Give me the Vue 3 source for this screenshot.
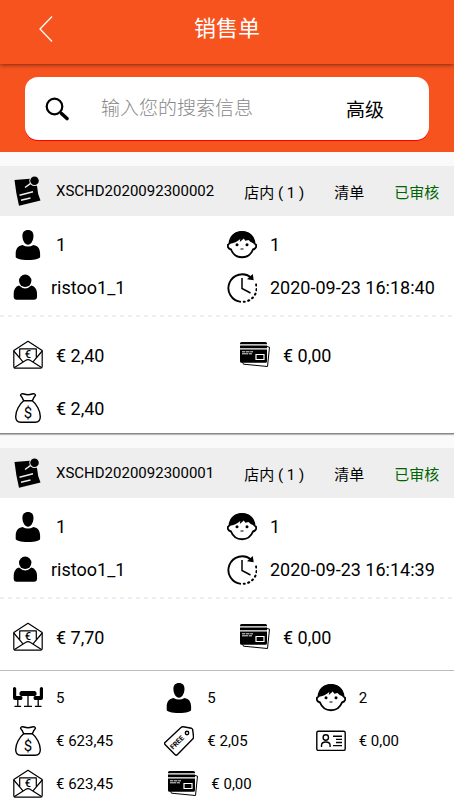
<script setup>
import { h, ref } from 'vue'

const keyword = ref('')

const marks = {
  envelope: { text: '€', x: 15, y: 18, 'font-size': 11, 'font-weight': 500 },
  bag: { text: '$', x: 15, y: 25, 'font-size': 15 },
  tag: { text: 'FREE', x: 13, y: 18, 'font-size': 7, 'font-weight': 700, transform: 'rotate(-45 14 16)' },
}

function Icon({ name }) {
  const children = [h('use', { href: '#' + name })]
  if (marks[name]) {
    const { text, ...attrs } = marks[name]
    children.push(h('text', { 'text-anchor': 'middle', ...attrs }, text))
  }
  return h('svg', { viewBox: name === 'user' ? '0 0 25 30' : '0 0 30 30', 'aria-hidden': 'true' }, children)
}
Icon.props = ['name']

const orders = [
  {
    code: 'XSCHD2020092300002',
    place: '店内 ( 1 )',
    status: '已审核',
    adults: '1',
    children: '1',
    user: 'ristoo1_1',
    time: '2020-09-23 16:18:40',
    cash: '€ 2,40',
    card: '€ 0,00',
    total: '€ 2,40',
  },
  {
    code: 'XSCHD2020092300001',
    place: '店内 ( 1 )',
    status: '已审核',
    adults: '1',
    children: '1',
    user: 'ristoo1_1',
    time: '2020-09-23 16:14:39',
    cash: '€ 7,70',
    card: '€ 0,00',
  },
]

const totals = [
  { icon: 'table', value: '5' },
  { icon: 'person', value: '5' },
  { icon: 'child', value: '2' },
  { icon: 'bag', value: '€ 623,45' },
  { icon: 'tag', value: '€ 2,05' },
  { icon: 'member', value: '€ 0,00' },
  { icon: 'envelope', value: '€ 623,45' },
  { icon: 'cards', value: '€ 0,00', shifted: true },
]
</script>

<template>
  <div class="page">
    <svg class="sprite" aria-hidden="true">
      <symbol id="note" viewBox="0 0 30 30">
        <path d="M1.500 4 20 2.500 24 10Q24.500 18 27.500 24.500L6 29.700Q3 18 1.500 4Z" />
        <circle cx="21.500" cy="4.800" r="5.200" fill="#eee" />
        <circle cx="21.500" cy="4.800" r="4.300" />
        <path d="M12 11.500 18 7.200M6.500 19.200l13.500-3.400M8 24.300l9.500-2.300" fill="none" stroke="#eee" stroke-width="1.500" />
      </symbol>
      <symbol id="person" viewBox="0 0 30 30">
        <path d="M15 0c3.600 0 5.600 2.300 5.500 6-.1 4.800-2.600 8.700-5.500 8.700S9.500 10.800 9.400 6C9.300 2.300 11.400 0 15 0Z" />
        <path d="M9.500 15q5.500 3 11 0c4.500.8 6.600 4 6.600 8.500v3.500c0 1.500-4.500 3-12.100 3S2.700 28.500 2.700 27v-3.500C2.700 19 5 15.800 9.500 15Z" />
      </symbol>
      <symbol id="user" viewBox="0 0 25 30">
        <circle cx="12.200" cy="7.800" r="6.200" />
        <path d="M6 12.500q6.200 5.800 12.400 0c3.700 1 5.600 4 5.600 8v3.200q0 3-3 3H3.700q-3 0-3-3v-3.200c0-4 1.800-7 5.300-8Z" />
      </symbol>
      <symbol id="child" viewBox="0 0 30 30">
        <path d="M2.500 13.500C-.5 15 .5 18.500 4 19.500 6 24.500 10 27.300 15 27.300s9-2.800 11-7.800c3.500-1 4.500-4.500 1.500-6C27 6.500 22 2.200 15 2.200S3 6.500 2.500 13.500Z" fill="#fff" stroke="#000" stroke-width="1.900" />
        <path d="M2.500 13.800C2.500 6 7.500 1 15 1S27.500 6 27.500 13.800q-4-1-6-3.800l-3.200.8-1.500-2.300-4 3.500.5-3Q9 13 2.500 13.800Z" />
        <circle cx="10" cy="14.800" r="1.500" /><circle cx="20" cy="14.800" r="1.500" />
        <path d="M13.500 19h3" stroke="#000" stroke-width="1" />
      </symbol>
      <symbol id="clock" viewBox="0 0 30 30">
        <g fill="none" stroke="#000">
          <path d="M24 4.500A13.800 13.800 0 1 0 14 28.900" stroke-width="1.900" />
          <path d="M15 5v10.500l8.500 4.500" stroke-width="1.500" />
          <path d="M16.800 28.800a13.800 13.800 0 0 0 12-18.500" stroke-width="2.100" stroke-linecap="round" stroke-dasharray="1 3.600" />
        </g>
        <path d="m25.800 1 .9 6.200-6.700-1Z" />
      </symbol>
      <symbol id="envelope" viewBox="0 0 30 30">
        <g fill="none" stroke="#000" stroke-width="1.200" stroke-linejoin="round">
          <path d="M.8 10.500 15 1.300l14.200 9.200v16q0 1.700-1.700 1.700h-25Q.8 28.200.8 26.500Z" />
          <path d="M.8 11 10 21.800M29.200 11 20 21.800M1.500 27.500 12.500 20.500q2.500-1.700 5 0l11 7" />
          <path d="M6.700 17.500V8.800h16.600v8.700" />
        </g>
      </symbol>
      <symbol id="bag" viewBox="0 0 30 30">
        <g fill="none" stroke="#000" stroke-width="1.400" stroke-linejoin="round">
          <path d="M10.700 7.800Q9.500 4.500 7.500 2.300q.5-2.300 3.500-1.300 4 1.400 8 0 3-1 3.500 1.300-2 2.200-3.200 5.500Z" />
          <path d="M10.700 7.800C6.500 11 2.700 18 2.700 23.500q0 5.700 5 5.700h14.600q5 0 5-5.700C27.300 18 23.500 11 19.300 7.800" />
        </g>
      </symbol>
      <symbol id="cards" viewBox="0 0 30 30">
        <path d="M27 6.500l2.500.7-2 19.300-24-2.300-1-2" fill="none" stroke="#000" />
        <path d="M1.500 2h24q1.500 0 1.500 1.500v.8H0v-.8Q0 2 1.500 2ZM0 5.500h27v2.800H0ZM0 9.500h27v11.700q0 1.600-1.500 1.600h-24Q0 22.800 0 21.200Z" />
        <path d="M2 11.800h3m.7 0h3.800m.7 0h2.800M2 13.800h6m.7 0h3.300" fill="none" stroke="#fff" stroke-width=".9" />
        <path d="M16 14.500h8v5h-8Z" fill="none" stroke="#fff" stroke-width="1.200" />
      </symbol>
      <symbol id="table" viewBox="0 0 30 30">
        <path d="M0 5.500Q0 4 1.500 4T3.200 5.500V13H8q1.500 0 1.500 2T8 17H2q-2 0-2-2ZM30 5.500Q30 4 28.500 4t-1.700 1.500V13H22q-1.500 0-1.500 2t1.500 2h6q2 0 2-2ZM8 8h14l1.500 1.500V12L22 13H8l-1.500-1V9.500Z" />
        <path d="M4.800 17v6M25.200 17v6M15 13v10M1.500 23.300h6.600M21.900 23.300h6.600M11 23.300h8" fill="none" stroke="#000" stroke-width="1.300" />
      </symbol>
      <symbol id="tag" viewBox="0 0 30 30">
        <g fill="none" stroke="#000" stroke-width="1.400" stroke-linejoin="round">
          <path d="M1 16.500 17 1.500q1-.9 2.300-.7l8.200 1.500q1 .3 1.200 1.400l.8 7q.1 1.300-.8 2.300L13.500 28.500q-1.300 1.300-2.600 0L1 18.500q-1-1 0-2Z" />
          <circle cx="23" cy="7" r="1.700" />
        </g>
      </symbol>
      <symbol id="member" viewBox="0 0 30 30">
        <g fill="none" stroke="#000" stroke-width="1.400">
          <rect x=".8" y="5.200" width="28.400" height="19.200" rx="1.500" />
          <circle cx="9.800" cy="11.500" r="2.700" />
          <path d="M5.500 21v-1.500q0-3.500 4.300-3.500t4.300 3.500V21M17 10.300h9M20 13.400h6M20 16.500h6M17 19.600h9" />
        </g>
      </symbol>
    </svg>

    <header class="topbar">
      <div class="side">
        <button class="back" type="button" aria-label="返回">
          <svg viewBox="0 0 14 26"><path d="M13 .5 1 13l12 12.500" fill="none" stroke="#fff" stroke-width="1.300" /></svg>
        </button>
      </div>
      <h1>销售单</h1>
      <div class="side"></div>
    </header>

    <form class="search" @submit.prevent>
      <div class="search-box">
        <label for="keyword" aria-label="搜索">
          <svg class="magnifier" viewBox="0 0 24 24" fill="none" stroke="#000">
            <circle cx="9.500" cy="9.500" r="7.800" stroke-width="2.200" />
            <path d="m15.500 15.500 2 2" stroke-width="2.500" />
            <path d="m17 17 5 4.500" stroke-width="3.600" stroke-linecap="round" />
          </svg>
        </label>
        <input id="keyword" v-model="keyword" type="text" placeholder="输入您的搜索信息" />
        <button type="button">高级</button>
      </div>
    </form>

    <main class="list">
      <article v-for="order in orders" :key="order.code" class="order">
        <header class="order-head">
          <Icon class="icon" name="note" />
          <span class="code">{{ order.code }}</span>
          <span>{{ order.place }}</span>
          <a href="#">清单</a>
          <span class="status">{{ order.status }}</span>
        </header>
        <div class="people">
          <div class="cell inset"><Icon class="icon" name="person" />{{ order.adults }}</div>
          <div class="cell"><Icon class="icon" name="child" />{{ order.children }}</div>
          <div class="cell inset"><Icon class="icon narrow" name="user" />{{ order.user }}</div>
          <div class="cell"><Icon class="icon" name="clock" />{{ order.time }}</div>
        </div>
        <div class="payments">
          <div class="cell inset"><Icon class="icon" name="envelope" />{{ order.cash }}</div>
          <div class="cell inset"><Icon class="icon" name="cards" />{{ order.card }}</div>
          <div class="cell inset"><template v-if="order.total"><Icon class="icon" name="bag" />{{ order.total }}</template></div>
        </div>
      </article>
    </main>

    <footer class="totals">
      <div v-for="item in totals" :key="item.icon" class="cell" :class="{ shifted: item.shifted }">
        <Icon class="icon" :name="item.icon" />{{ item.value }}
      </div>
    </footer>
  </div>
</template>

<style>
body {
  margin: 0;
}
</style>

<style scoped>
.page {
  display: flex;
  flex-direction: column;
  height: 100vh;
  background: #fafafa;
  color: #000;
  font-family: Roboto, "Noto Sans CJK SC", sans-serif;
}
.page * {
  box-sizing: border-box;
}
.sprite {
  position: absolute;
  width: 0;
  height: 0;
}
button,
input {
  padding: 0;
  border: 0;
  background: none;
  color: inherit;
  font: inherit;
}
.topbar {
  display: flex;
  flex: none;
  align-items: center;
  height: 64px;
  padding: 0 39px 6px;
  background: #f7531f;
  box-shadow: 0 1px 4px rgba(0, 0, 0, 0.5);
  color: #fff;
  z-index: 1;
}
.side {
  display: flex;
  flex: 1;
}
.back svg {
  display: block;
  width: 14px;
  height: 26px;
}
h1 {
  margin: 0;
  font-size: 22px;
  font-weight: 400;
  line-height: 32px;
}
.search {
  flex: none;
  padding: 13px 25px 12px;
  background: #f7531f;
}
.search-box {
  display: flex;
  align-items: center;
  height: 63px;
  padding: 0 45px 0 20px;
  border-radius: 13px;
  background: #fff;
  box-shadow: 0 1px 0 #f00;
  font-size: 19px;
}
.magnifier {
  display: block;
  width: 24px;
  height: 24px;
}
.search-box input {
  flex: 1;
  min-width: 0;
  margin-left: 32px;
  outline: 0;
}
.search-box input::placeholder {
  color: #888;
  font-weight: 300;
  opacity: 1;
}
.list {
  flex: 1;
  min-height: 0;
  overflow-y: auto;
  scrollbar-width: none;
}
.order {
  margin-top: 14px;
  border-bottom: 1px solid #888;
  background: #fff;
  box-shadow: 0 1px 1px #bbb;
}
.order-head {
  display: flex;
  align-items: center;
  gap: 30px;
  height: 50px;
  padding: 0 17px 0 13px;
  background: #eee;
  font-size: 15px;
  white-space: nowrap;
}
.order-head a {
  color: inherit;
  text-decoration: none;
}
.code {
  flex: 1;
  margin-left: -17px;
}
.status {
  color: #006400;
}
.icon {
  flex: none;
  width: 30px;
  height: 30px;
}
.narrow {
  width: 25px;
}
.cell {
  display: flex;
  align-items: center;
  gap: 13px;
  white-space: nowrap;
}
.inset {
  padding-left: 13px;
}
.people,
.payments {
  display: grid;
  grid-template-columns: 1fr 1fr;
  font-size: 18px;
}
.people {
  grid-auto-rows: 43px;
  padding: 7px 0 6px;
}
.payments {
  grid-auto-rows: 32px;
  row-gap: 21px;
  padding: 24px 0 9px;
  background: repeating-linear-gradient(90deg, #eee 0 4px, #fff 4px 8px) top / 100% 2px no-repeat;
}
.totals {
  display: grid;
  flex: none;
  grid-template-columns: repeat(3, 1fr);
  grid-auto-rows: 30px;
  row-gap: 13px;
  padding: 12px 0 1px;
  border-top: 1px solid #bbb;
  background: #fff;
  font-size: 15px;
}
.totals .cell {
  padding-left: 13px;
}
.totals .shifted {
  padding-left: 17px;
}
</style>
